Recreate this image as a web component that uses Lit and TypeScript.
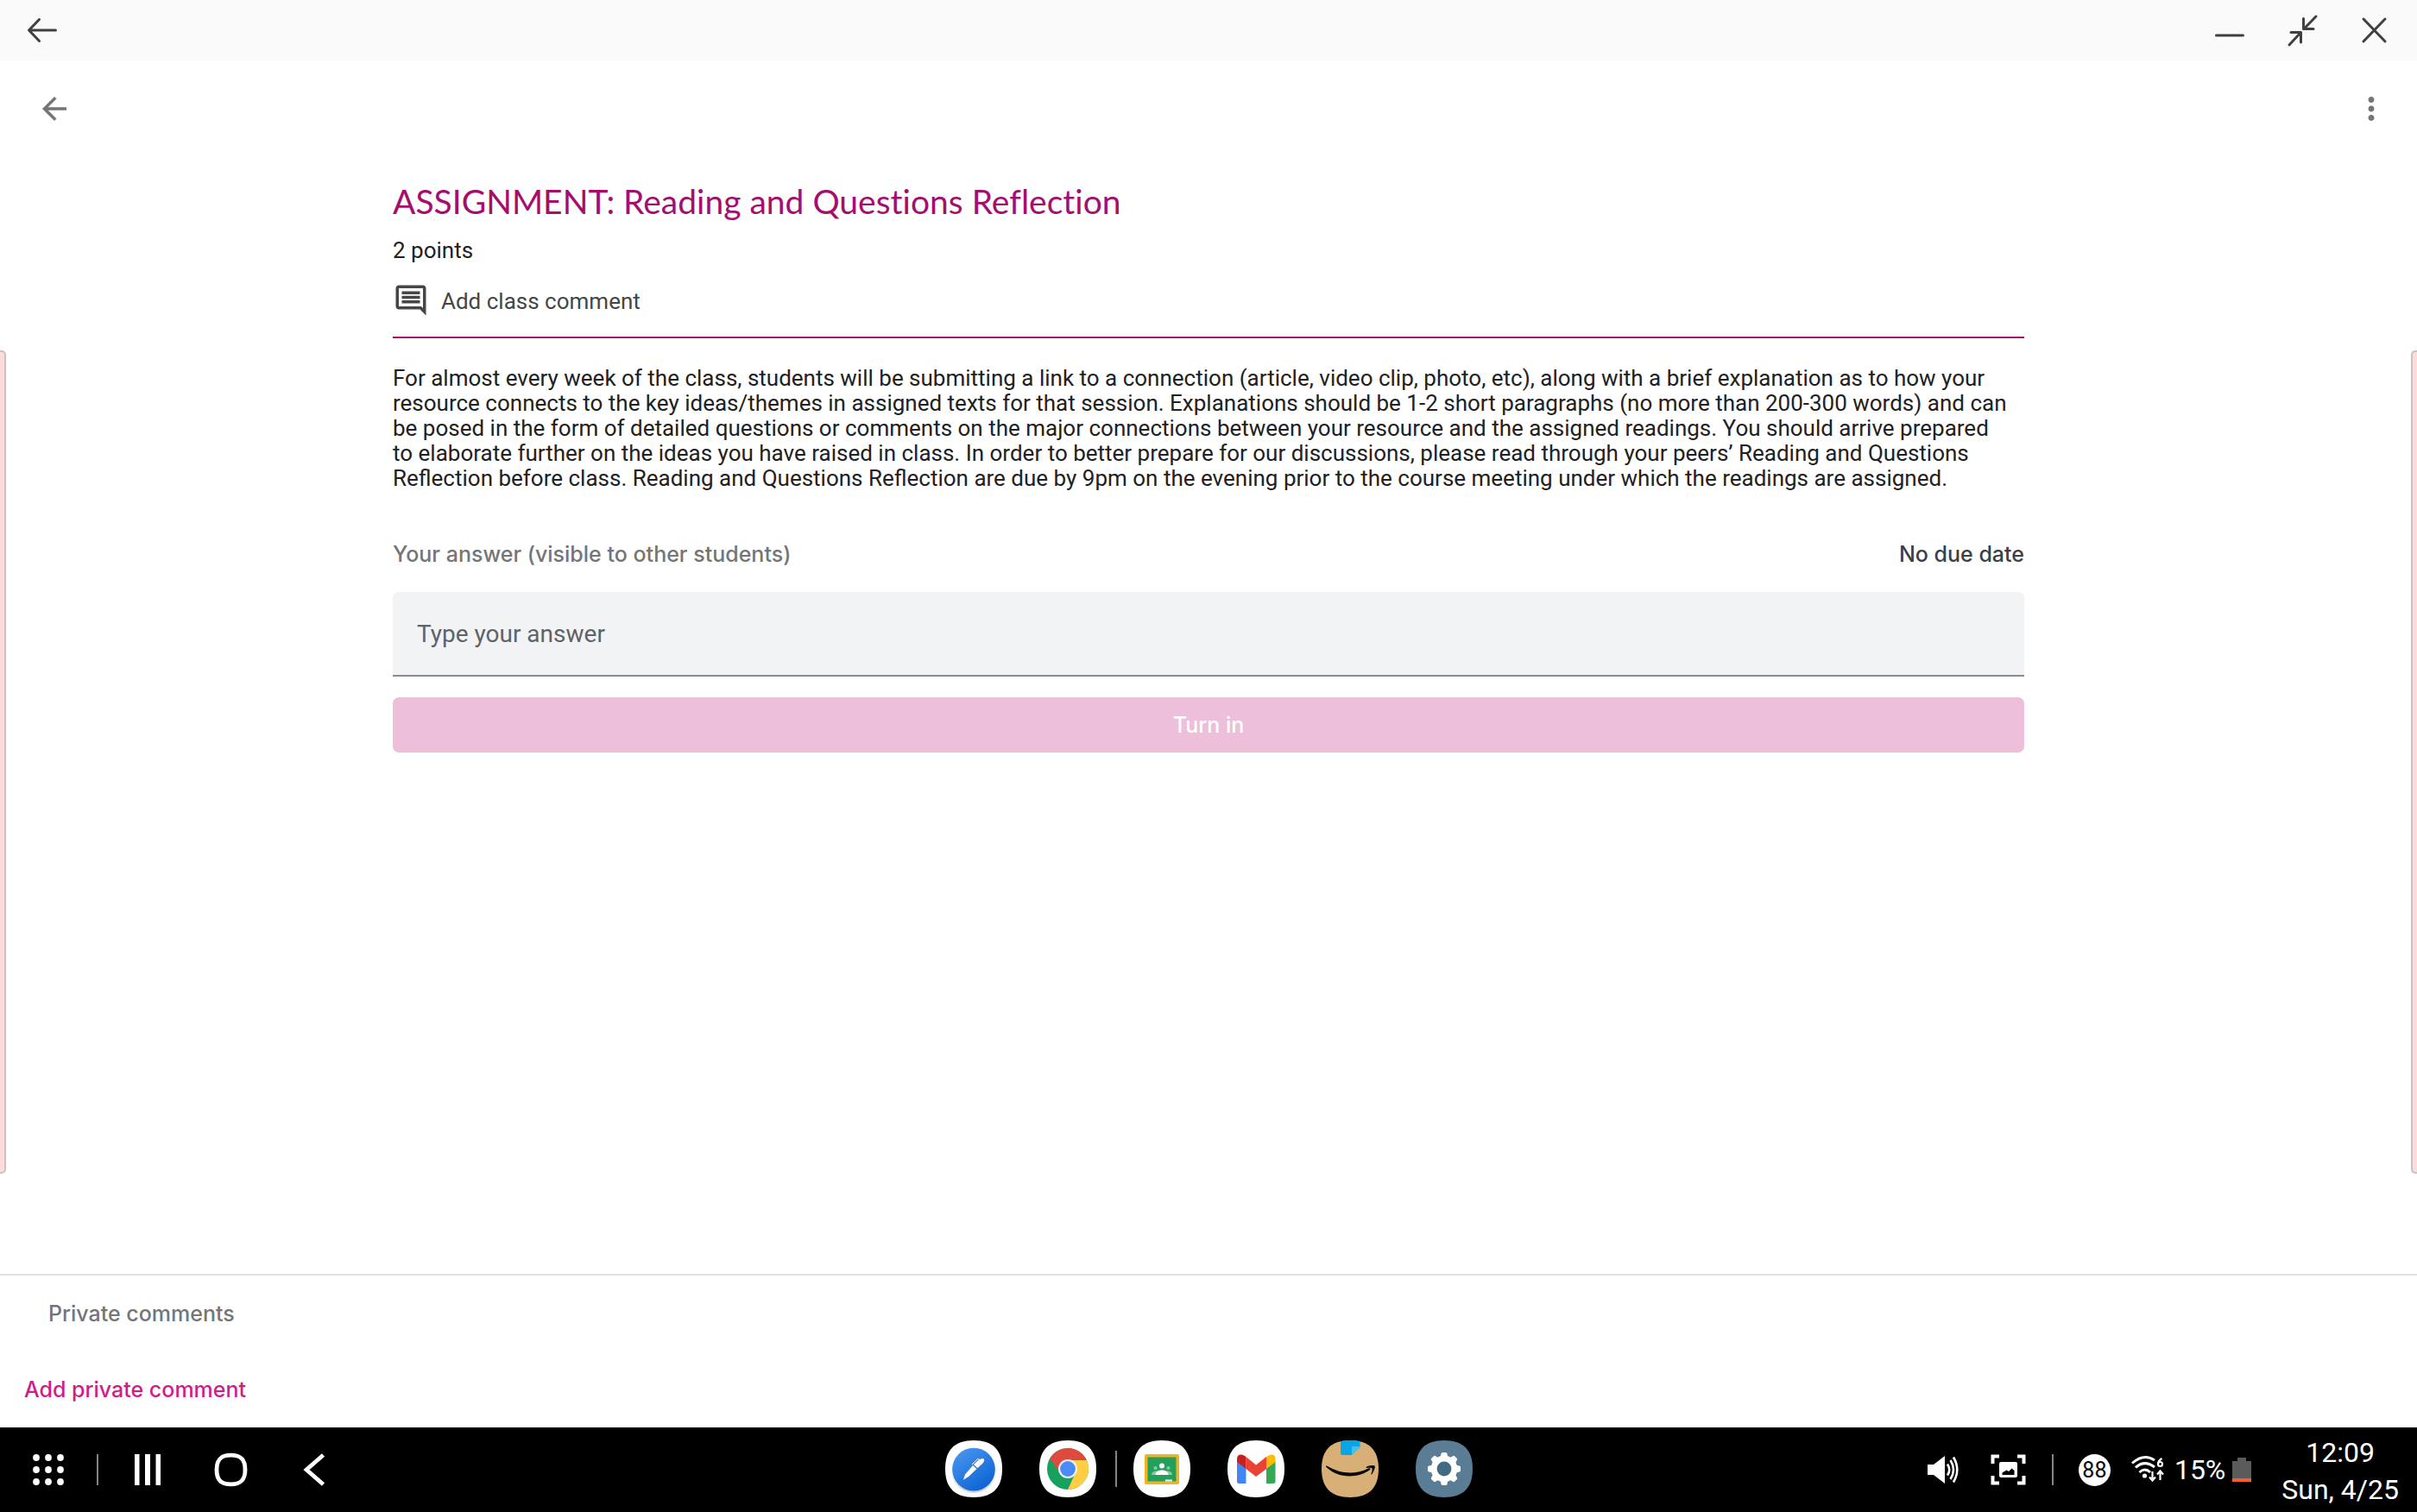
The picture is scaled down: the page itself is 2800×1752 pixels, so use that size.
import { LitElement, html, css, svg } from "lit";
import { customElement } from "lit/decorators.js";

const squircle =
  "M33 0C55 0 66 11 66 33S55 66 33 66 0 55 0 33 11 0 33 0Z";

const gearTeeth = [0, 45, 90, 135, 180, 225, 270, 315];

@customElement("window-bar")
export class WindowBar extends LitElement {
  static styles = css`
    :host {
      display: flex;
      justify-content: space-between;
      align-items: center;
      height: 70px;
      padding: 0 24px;
      background: #fafafa;
    }
    .controls {
      display: flex;
      gap: 34px;
    }
    .btn {
      display: block;
      padding: 0;
      border: 0;
      background: none;
      cursor: pointer;
    }
    .icon {
      display: block;
      width: 50px;
      height: 50px;
      fill: none;
      stroke: #404040;
      stroke-width: 3;
      stroke-linecap: round;
      stroke-linejoin: round;
    }
  `;

  render() {
    return html`
      <button class="btn" aria-label="Back">
        <svg class="icon" viewBox="0 0 50 50">
          <path d="M40.5 25H10M21.500 12.500 9.500 25 21.500 37.500" />
        </svg>
      </button>
      <div class="controls">
        <button class="btn" aria-label="Minimize">
          <svg class="icon" viewBox="0 0 50 50">
            <path d="M9.500 31H40.500" />
          </svg>
        </button>
        <button class="btn" aria-label="Exit full screen">
          <svg class="icon" viewBox="0 0 50 50">
            <path
              d="M41 9 27 23.500M26.500 11.500V23.500H38M10 42 23.500 27.500M12 27.500H23.500V39"
            />
          </svg>
        </button>
        <button class="btn" aria-label="Close">
          <svg class="icon" viewBox="0 0 50 50">
            <path d="M12 12 37 38M37 12 12 38" />
          </svg>
        </button>
      </div>
    `;
  }
}

@customElement("assignment-page")
export class AssignmentPage extends LitElement {
  static styles = css`
    :host {
      display: flex;
      flex-direction: column;
      flex: 1;
      color: #212121;
      font: 26px/32px Roboto, sans-serif;
    }
    .toolbar {
      display: flex;
      justify-content: space-between;
      align-items: center;
      height: 112px;
      padding: 0 32px 0 42px;
    }
    .btn {
      display: block;
      padding: 0;
      border: 0;
      background: none;
      font: inherit;
      color: inherit;
      cursor: pointer;
    }
    .tool {
      display: block;
      width: 42px;
      height: 42px;
      fill: #757575;
    }
    .body {
      display: flex;
      flex: 1;
      justify-content: space-between;
    }
    .peek {
      box-sizing: border-box;
      width: 7px;
      margin: 224px 0 116px;
      background: #ffdcdc;
      border: 2px solid #c9c4c4;
    }
    .peek-left {
      border-left: 0;
      border-radius: 0 5px 5px 0;
    }
    .peek-right {
      border-right: 0;
      border-radius: 5px 0 0 5px;
    }
    .content {
      width: 1890px;
      max-width: calc(100% - 80px);
      padding-top: 27px;
    }
    .title {
      margin: 0;
      font: 400 39px/48px Lato, sans-serif;
      font-variant-ligatures: none;
      color: #a50e6d;
    }
    .points {
      margin: 17px 0 21px;
    }
    .comment {
      display: flex;
      align-items: flex-start;
      gap: 14px;
      line-height: 44px;
      color: #444746;
    }
    .comment-icon {
      width: 42px;
      height: 42px;
      fill: #444746;
    }
    .rule {
      height: 2px;
      margin: 19px 0 32px;
      border: 0;
      background: #a0116b;
    }
    .text {
      margin: 0;
      line-height: 29px;
      white-space: pre-line;
    }
    .answer-head {
      display: flex;
      justify-content: space-between;
      margin: 57px 0 28px;
      font-family: Inter, sans-serif;
      font-size: 25px;
      font-weight: 500;
    }
    .answer-label {
      color: #757575;
    }
    .due {
      color: #3c4043;
    }
    .answer {
      display: block;
      box-sizing: border-box;
      width: 100%;
      height: 98px;
      padding: 0 28px;
      border: 0;
      border-bottom: 2px solid #8c8c8e;
      border-radius: 7px 7px 0 0;
      background: #f1f3f4;
      font: 28px/36px Roboto, sans-serif;
      color: #212121;
    }
    .answer::placeholder {
      color: #5f6368;
      opacity: 1;
    }
    .turn-in {
      display: block;
      width: 100%;
      height: 64px;
      margin-top: 24px;
      border: 0;
      border-radius: 7px;
      background: #edbfdb;
      font: 500 25px/32px Inter, sans-serif;
      color: #fff;
    }
    .private {
      display: flex;
      flex-direction: column;
      align-items: flex-start;
      gap: 56px;
      padding: 28px;
      border-top: 2px solid #e0e0e0;
      font-family: Inter, sans-serif;
      font-size: 25px;
    }
    .private-title {
      margin: 0 28px;
      font-size: 25px;
      font-weight: 500;
      line-height: 32px;
      color: #757575;
    }
    .add-private {
      font-weight: 500;
      color: #d01c8b;
    }
  `;

  render() {
    return html`
      <header class="toolbar">
        <button class="btn" aria-label="Navigate up">
          <svg class="tool" viewBox="0 0 24 24">
            <path
              d="M20 11H7.830l5.590-5.590L12 4l-8 8 8 8 1.410-1.410L7.830 13H20v-2z"
            />
          </svg>
        </button>
        <button class="btn" aria-label="More options">
          <svg class="tool" viewBox="0 0 24 24">
            <path
              d="M12 8c1.100 0 2-.9 2-2s-.9-2-2-2-2 .9-2 2 .9 2 2 2zm0 2c-1.100 0-2 .9-2 2s.9 2 2 2 2-.9 2-2-.9-2-2-2zm0 6c-1.100 0-2 .9-2 2s.9 2 2 2 2-.9 2-2-.9-2-2-2z"
            />
          </svg>
        </button>
      </header>
      <div class="body">
        <div class="peek peek-left"></div>
        <main class="content">
          <h1 class="title">ASSIGNMENT: Reading and Questions Reflection</h1>
          <p class="points">2 points</p>
          <button class="btn comment">
            <svg class="comment-icon" viewBox="0 0 24 24">
              <path
                d="M21.990 4c0-1.100-.89-2-1.990-2H4c-1.100 0-2 .9-2 2v12c0 1.100.9 2 2 2h14l4 4-.01-18zM20 4v13.170L18.830 16H4V4h16zM6 12h12v2H6zm0-3h12v2H6zm0-3h12v2H6z"
              />
            </svg>
            Add class comment
          </button>
          <hr class="rule" />
          <p class="text">For almost every week of the class, students will be submitting a link to a connection (article, video clip, photo, etc), along with a brief explanation as to how your
resource connects to the key ideas/themes in assigned texts for that session. Explanations should be 1-2 short paragraphs (no more than 200-300 words) and can
be posed in the form of detailed questions or comments on the major connections between your resource and the assigned readings. You should arrive prepared
to elaborate further on the ideas you have raised in class. In order to better prepare for our discussions, please read through your peers’ Reading and Questions
Reflection before class. Reading and Questions Reflection are due by 9pm on the evening prior to the course meeting under which the readings are assigned.</p>
          <div class="answer-head">
            <label class="answer-label" for="answer"
              >Your answer (visible to other students)</label
            >
            <span class="due">No due date</span>
          </div>
          <input
            class="answer"
            id="answer"
            type="text"
            placeholder="Type your answer"
          />
          <button class="turn-in" disabled>Turn in</button>
        </main>
        <div class="peek peek-right"></div>
      </div>
      <section class="private">
        <h2 class="private-title">Private comments</h2>
        <button class="btn add-private">Add private comment</button>
      </section>
    `;
  }
}

@customElement("task-bar")
export class TaskBar extends LitElement {
  static styles = css`
    :host {
      display: grid;
      grid-template-columns: 1fr auto 1fr;
      align-items: center;
      height: 98px;
      background: #000;
      color: #fff;
      font: 32px/43px Roboto, sans-serif;
    }
    .nav,
    .dock,
    .status {
      display: flex;
      align-items: center;
    }
    .nav {
      padding-left: 33px;
      gap: 33px;
    }
    .status {
      justify-content: flex-end;
      padding-right: 21px;
    }
    .dock {
      gap: 43px;
      padding-bottom: 2px;
    }
    .pair {
      display: flex;
      align-items: center;
    }
    .btn {
      display: block;
      padding: 0;
      border: 0;
      background: none;
      cursor: pointer;
    }
    .glyph {
      display: block;
      width: 46px;
      height: 46px;
      fill: #fff;
    }
    .app {
      display: block;
      width: 66px;
      height: 66px;
    }
    .sep {
      width: 2px;
      height: 36px;
      background: #858585;
    }
    .sep-tall {
      height: 42px;
      margin: 0 19px 0 22px;
    }
    .nav-keys {
      display: flex;
      gap: 50px;
    }
    .status-icons {
      display: flex;
      align-items: center;
      gap: 28px;
    }
    .system {
      display: flex;
      align-items: center;
      margin-left: 29px;
      gap: 20px;
    }
    .battery {
      display: flex;
      align-items: center;
      gap: 8px;
    }
    .cell {
      display: block;
      width: 22px;
      height: 28px;
    }
    .count {
      display: flex;
      justify-content: center;
      align-items: center;
      width: 37px;
      height: 37px;
      border-radius: 50%;
      background: #fff;
      color: #000;
      font-size: 25px;
      line-height: 37px;
    }
    .clock {
      margin-left: 35px;
      padding-top: 3px;
      text-align: center;
    }
  `;

  render() {
    return html`
      <nav class="nav">
        <button class="btn" aria-label="Apps">
          <svg class="glyph" viewBox="0 0 46 46">
            ${[9, 23, 37].map((y) =>
              [9, 23, 37].map(
                (x) => svg`<circle cx=${x} cy=${y} r="3.900" />`
              )
            )}
          </svg>
        </button>
        <span class="sep"></span>
        <div class="nav-keys">
          <button class="btn" aria-label="Recent apps">
            <svg class="glyph" viewBox="0 0 46 46">
              <path d="M9 5h5.500v36H9zM21 5h6v36h-6zM33.500 5H39v36h-5.500z" />
            </svg>
          </button>
          <button class="btn" aria-label="Home">
            <svg class="glyph" viewBox="0 0 46 46">
              <path
                d="M24.500 6.200C36 6.200 41 11 41 23S36 39.800 24.500 39.800 8 35 8 23 13 6.200 24.500 6.200Z"
                fill="none"
                stroke="#fff"
                stroke-width="4.800"
              />
            </svg>
          </button>
          <button class="btn" aria-label="Back">
            <svg class="glyph" viewBox="0 0 46 46">
              <path
                d="M35.500 6 16 23 35.500 40"
                fill="none"
                stroke="#fff"
                stroke-width="4.800"
              />
            </svg>
          </button>
        </div>
      </nav>

      <div class="dock">
        <button class="btn" aria-label="Notes">
          <svg class="app" viewBox="0 0 66 66">
            <defs>
              <linearGradient id="pen" x1="0" y1="0" x2="0.7" y2="1">
                <stop offset="0" stop-color="#4f9bf2" />
                <stop offset="1" stop-color="#0c63d3" />
              </linearGradient>
              <radialGradient id="glow">
                <stop offset="0.8" stop-color="#7d8aa0" />
                <stop offset="1" stop-color="#fff" stop-opacity="0" />
              </radialGradient>
            </defs>
            <path d=${squircle} fill="#fff" />
            <circle cx="33" cy="36" r="27" fill="url(#glow)" />
            <circle cx="33" cy="33.500" r="24.800" fill="url(#pen)" />
            <path
              d="M21 45.800 23 39.500 32 29 36.500 33 27 42Z"
              fill="#fff"
            />
            <path
              d="M33 28 38.500 22.800Q43.500 19.800 45 21.800 46 24 42.500 27.500L37.500 32Z"
              fill="#fff"
            />
            <path
              d="M31 28 37.500 21.500 39.500 22"
              fill="none"
              stroke="#fff"
              stroke-width="1"
            />
          </svg>
        </button>
        <div class="pair">
          <button class="btn" aria-label="Chrome">
            <svg class="app" viewBox="0 0 66 66">
              <path d=${squircle} fill="#fff" />
              <circle cx="33" cy="33" r="24" fill="#17a05e" />
              <path
                d="M33 23H54.800A24 24 0 0 1 33 57L41.700 38Z"
                fill="#ffce44"
              />
              <path
                d="M12.200 21A24 24 0 0 1 54.800 23H33L24.300 38.500Z"
                fill="#dd4b3e"
              />
              <circle cx="33" cy="33" r="11" fill="#f1f1f1" />
              <circle cx="33" cy="33" r="8.900" fill="#4c8bf5" />
            </svg>
          </button>
          <span class="sep sep-tall"></span>
          <button class="btn" aria-label="Classroom">
            <svg class="app" viewBox="0 0 66 66">
              <path d=${squircle} fill="#fff" />
              <rect x="13" y="16" width="40" height="35" rx="2" fill="#f0b41f" />
              <rect x="16.500" y="19.500" width="33" height="28" fill="#23a05c" />
              <g fill="#83ca9f">
                <circle cx="25.500" cy="32" r="2.100" />
                <circle cx="40.500" cy="32" r="2.100" />
                <path
                  d="M21 40c0-3 2.500-4.500 5-4.500h14c2.500 0 5 1.500 5 4.500Z"
                />
              </g>
              <g fill="#fff">
                <circle cx="33" cy="29.500" r="3" />
                <path d="M25.500 40c0-4 4-5.500 7.500-5.500s7.500 1.500 7.500 5.500Z" />
                <path d="M37 45.500h8v2h-8z" />
              </g>
            </svg>
          </button>
        </div>
        <button class="btn" aria-label="Gmail">
          <svg class="app" viewBox="0 0 66 66">
            <path d=${squircle} fill="#fff" />
            <path d="M11 24 21.500 32V50H13.500Q11 50 11 47.500Z" fill="#4285f4" />
            <path d="M45 32 55.500 24V47.500Q55.500 50 53 50H45Z" fill="#34a853" />
            <path
              d="M45 19.500C51 14.500 55.500 16.500 55.500 21.500V25L45 33Z"
              fill="#fbbc04"
            />
            <path d="M21.500 19 33 28.500 45 19V33L33 42 21.500 33Z" fill="#ea4335" />
            <path
              d="M21.500 19C15.500 14.500 11 16.500 11 21.500V25L21.500 33Z"
              fill="#c5221f"
            />
          </svg>
        </button>
        <button class="btn" aria-label="Amazon Shopping">
          <svg class="app" viewBox="0 0 66 66">
            <path d=${squircle} fill="#d8b077" />
            <path d="M22 1C29 -.3 37 -.3 44.500 1V8L35 17H24Q22 17 22 15Z" fill="#08a6e4" />
            <path d="M44.500 7V8L35 17V7Z" fill="#3fc2f5" />
            <path
              d="M5 30.500C4.500 29.500 6 29 7 30 23 39.500 40 39.500 54 32.500 56.500 31.500 57.500 33 55.500 34.500 41 44.500 18 44 5 30.500Z"
              fill="#0a0a0a"
            />
            <path
              d="M51.500 31C55 28.800 61 28.500 61.700 29.800 62.500 31.500 60.500 36 58.500 39 57.500 40 57 39.500 57.500 38.500 58.500 36 59 33.500 58.500 32.500 57.500 31.500 54.500 31.800 52 32Z"
              fill="#0a0a0a"
            />
          </svg>
        </button>
        <button class="btn" aria-label="Settings">
          <svg class="app" viewBox="0 0 66 66">
            <path d=${squircle} fill="#5b7c95" />
            <circle cx="33" cy="33" r="15.300" fill="#fff" />
            ${gearTeeth.map(
              (angle) => svg`<path
                d="M28.500 20 29.500 15.500Q29.800 14 31 14H35Q36.200 14 36.500 15.500L37.500 20Z"
                fill="#fff"
                transform="rotate(${angle} 33 33)"
              />`
            )}
            <circle cx="33" cy="33" r="8.400" fill="#426b82" />
          </svg>
        </button>
      </div>

      <div class="status">
        <div class="status-icons">
          <button class="btn" aria-label="Volume">
            <svg class="glyph" viewBox="0 0 46 46">
              <path d="M4 17h7l13-10v32L11 29H4Z" />
              <path
                d="M27 16.500Q31.500 23 27 29.500M30.500 12Q37.500 23 30.500 34M34 8.500Q42.500 23 34 37.500"
                fill="none"
                stroke="#fff"
                stroke-width="2.600"
              />
            </svg>
          </button>
          <button class="btn" aria-label="Screen capture">
            <svg class="glyph" viewBox="0 0 46 46">
              <path
                d="M13 7.500H5.500V16M34 7.500H41.500V16M13 38.500H5.500V30M34 38.500H41.500V30"
                fill="none"
                stroke="#fff"
                stroke-width="4"
              />
              <path
                fill-rule="evenodd"
                d="M15 14h17q2 0 2 2v14q0 2-2 2H15q-2 0-2-2V16q0-2 2-2ZM16.500 29h14v-5l-3-2.500-3.500 3.500-2.500-1.500-5 3Z"
              />
            </svg>
          </button>
          <span class="sep"></span>
        </div>
        <div class="system">
          <span class="count">88</span>
          <div class="battery">
            <svg class="glyph" viewBox="0 0 46 46" aria-label="Wi-Fi">
              <g fill="none" stroke="#fff" stroke-width="3">
                <path d="M5 15.500Q18.500 3.500 31 12" />
                <path d="M9 20.500Q19.500 11 31 20" />
                <path d="M13.500 26Q19.500 20 26 26" />
              </g>
              <circle cx="19.500" cy="30" r="2.600" />
              <g fill="none" stroke="#fff" stroke-width="2.200">
                <path d="M28.500 25V35M25 31.500 28.500 35.500 32 31.500" />
                <path d="M37.500 35V25M34 28.500 37.500 24.500 41 28.500" />
                <path d="M39.500 10Q35 12.500 35 16.500" />
                <circle cx="37.500" cy="16.500" r="2.500" />
              </g>
            </svg>
            <span>15%</span>
            <svg class="cell" viewBox="0 0 22 28">
              <path d="M6 0h10v4h6v20H0V4h6Z" fill="#5b5b5b" />
              <path d="M0 24h22v4H0Z" fill="#f4602b" />
            </svg>
          </div>
        </div>
        <div class="clock">
          <div>12:09</div>
          <div>Sun, 4/25</div>
        </div>
      </div>
    `;
  }
}

@customElement("app-root")
export class AppRoot extends LitElement {
  static styles = css`
    :host {
      display: flex;
      flex-direction: column;
      min-height: 100vh;
      background: #fff;
    }
  `;

  render() {
    return html`
      <window-bar></window-bar>
      <assignment-page></assignment-page>
      <task-bar></task-bar>
    `;
  }
}
